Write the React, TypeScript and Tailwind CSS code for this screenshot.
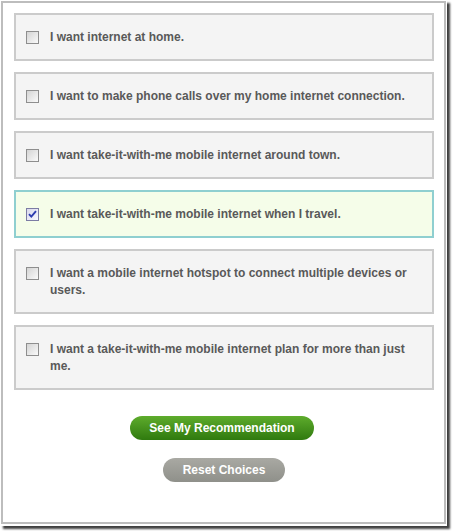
import React, { useState } from 'react';

const choices = [
  'I want internet at home.',
  'I want to make phone calls over my home internet connection.',
  'I want take-it-with-me mobile internet around town.',
  'I want take-it-with-me mobile internet when I travel.',
  'I want a mobile internet hotspot to connect multiple devices or users.',
  'I want a take-it-with-me mobile internet plan for more than just me.',
];

const Checkbox = ({ checked }: { checked: boolean }) => (
  <div
    className={`mt-[2px] w-[13px] h-[13px] shrink-0 border flex items-center justify-center ${
      checked
        ? 'border-[#7c7ca4] bg-gradient-to-br from-[#d9d9ec] to-[#f7f7ff]'
        : 'border-[#8e8e8e] bg-gradient-to-br from-[#d4d4d4] to-[#fafafa]'
    }`}
  >
    {checked && (
      <svg width="9" height="9" viewBox="0 0 9 9">
        <path d="M1 4.2 L3.3 6.6 L8 1.2" stroke="#2c3bb0" strokeWidth="1.9" fill="none" />
      </svg>
    )}
  </div>
);

const App = () => {
  const [selected, setSelected] = useState<number[]>([3]);

  const toggle = (i: number) =>
    setSelected((s) => (s.includes(i) ? s.filter((x) => x !== i) : [...s, i]));

  return (
    <div className="w-[453px] h-[531px] bg-white font-['Liberation_Sans',Arial,sans-serif]">
      <div className="w-[447px] h-[526px] bg-white p-[1px] shadow-[3px_3px_2px_rgba(0,0,0,0.75)]">
        <div className="w-[445px] h-[523px] border-2 border-[#bdbdbd] pt-[10px] pl-[11px]">
          {/* Choices */}
          <div className="w-[420px] flex flex-col gap-[11px]">
            {choices.map((text, i) => {
              const on = selected.includes(i);
              return (
                <div
                  key={i}
                  onClick={() => toggle(i)}
                  className={`flex items-start gap-[11px] border-2 pl-[10px] pr-[10px] pt-[14px] pb-[13px] cursor-pointer ${
                    on ? 'border-[#8fcfd0] bg-[#f5fde9]' : 'border-[#cbcbcb] bg-[#f4f4f4]'
                  }`}
                >
                  <Checkbox checked={on} />
                  <span className="text-[12px] leading-[17px] font-bold text-[#595959] pr-[12px]">
                    {text}
                  </span>
                </div>
              );
            })}
          </div>

          {/* Actions */}
          <div className="w-[420px] flex flex-col items-center mt-[26px] gap-[18px]">
            <button className="w-[184px] h-[24px] ml-[-4px] rounded-full bg-gradient-to-b from-[#5eac2c] to-[#2f7a0e] text-white text-[12px] font-bold">
              See My Recommendation
            </button>
            <button
              onClick={() => setSelected([])}
              className="w-[122px] h-[24px] rounded-full bg-gradient-to-b from-[#a9a9a3] to-[#8f908a] text-white text-[12px] font-bold"
            >
              Reset Choices
            </button>
          </div>
        </div>
      </div>
    </div>
  );
};

export default App;
